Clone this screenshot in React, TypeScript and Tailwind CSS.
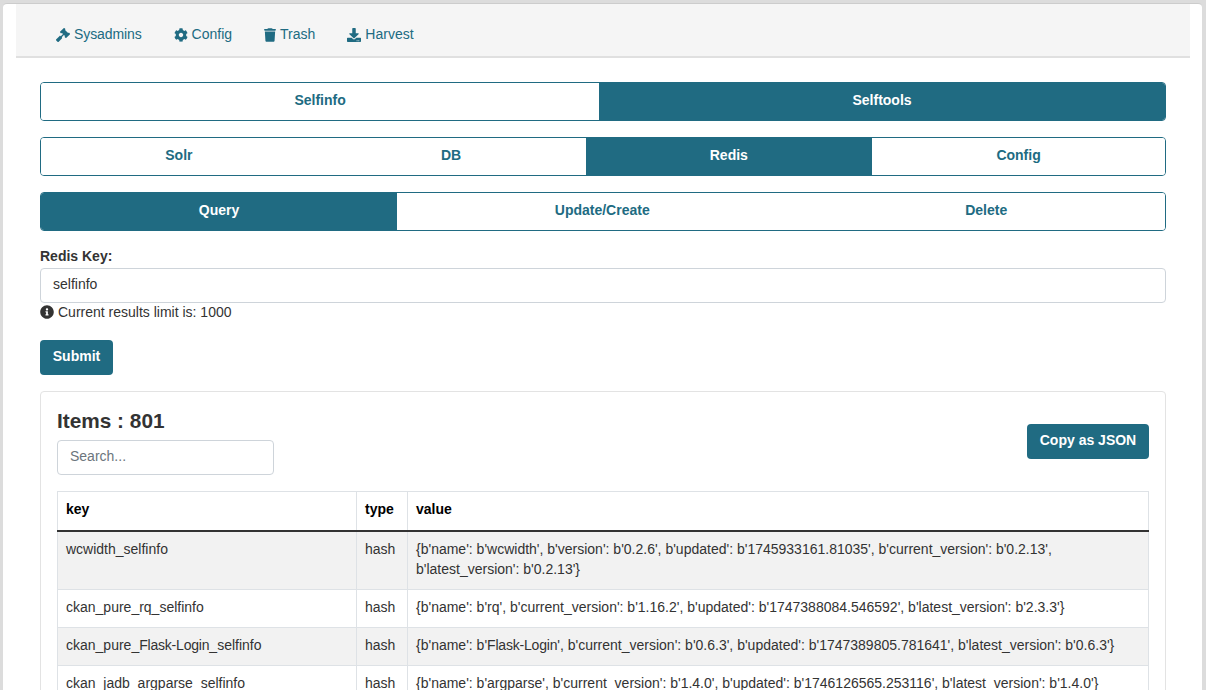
import { FaGavel, FaCog, FaDownload, FaInfoCircle } from "react-icons/fa";
import { FaTrash } from "react-icons/fa6";

function Segmented({ items, active }: { items: string[]; active: string }) {
  return (
    <div className="flex h-[39px] rounded-[4px] border border-[#206b82] overflow-hidden">
      {items.map((t) => (
        <div
          key={t}
          className={
            t === active
              ? "flex-auto flex items-center justify-center px-4 pb-[2px] text-[14px] font-bold bg-[#206b82] text-white"
              : "flex-auto flex items-center justify-center px-4 pb-[2px] text-[14px] font-bold bg-white text-[#206b82]"
          }
        >
          {t}
        </div>
      ))}
    </div>
  );
}

const rows = [
  ["wcwidth_selfinfo", "hash", "{b'name': b'wcwidth', b'version': b'0.2.6', b'updated': b'1745933161.81035', b'current_version': b'0.2.13', b'latest_version': b'0.2.13'}"],
  ["ckan_pure_rq_selfinfo", "hash", "{b'name': b'rq', b'current_version': b'1.16.2', b'updated': b'1747388084.546592', b'latest_version': b'2.3.3'}"],
  ["ckan_pure_Flask-Login_selfinfo", "hash", "{b'name': b'Flask-Login', b'current_version': b'0.6.3', b'updated': b'1747389805.781641', b'latest_version': b'0.6.3'}"],
  ["ckan_jadb_argparse_selfinfo", "hash", "{b'name': b'argparse', b'current_version': b'1.4.0', b'updated': b'1746126565.253116', b'latest_version': b'1.4.0'}"],
];

function CellText({ text }: { text: string }) {
  const parts = text.split("Flask-Login");
  if (parts.length === 1) return <>{text}</>;
  return (
    <>
      {parts[0]}
      <span className="tracking-[-0.2px]">Flask-Login</span>
      {parts[1]}
    </>
  );
}

function NavItem({ icon, label, tight }: { icon: React.ReactNode; label: string; tight?: boolean }) {
  return (
    <div className="flex items-center gap-[4px] text-[14px] text-[#206b82]">
      {icon}
      <span className={tight ? "tracking-[-0.1px]" : ""}>{label}</span>
    </div>
  );
}

export default function App() {
  return (
    <div className="h-[690px] overflow-hidden bg-[#dcdcdc] pt-[3px] px-[3px] font-['Liberation_Sans',sans-serif] text-[14px] text-[#333333] [text-rendering:optimizeLegibility] [font-kerning:normal]">
      <div className="w-[1199px] h-[700px] bg-white rounded-t-[4px] border-t border-[#cccccc] px-[13px]">
        <div className="h-[54px] w-[1174px] bg-[#f5f5f5] border-b-2 border-[#e0e0e0] flex items-center pt-[9px] pl-[40px] gap-[32px]">
          <NavItem icon={<FaGavel className="w-[14px] h-[14px]" />} label="Sysadmins" tight />
          <NavItem icon={<FaCog className="w-[14px] h-[14px]" />} label="Config" />
          <NavItem icon={<FaTrash className="w-[12px] h-[14px]" />} label="Trash" />
          <NavItem icon={<FaDownload className="w-[14px] h-[14px]" />} label="Harvest" />
        </div>
        <div className="w-[1126px] ml-[24px] mt-[24px] flex flex-col">
          <Segmented items={["Selfinfo", "Selftools"]} active="Selftools" />
          <div className="mt-[16px]">
            <Segmented items={["Solr", "DB", "Redis", "Config"]} active="Redis" />
          </div>
          <div className="mt-[16px]">
            <Segmented items={["Query", "Update/Create", "Delete"]} active="Query" />
          </div>
          <label className="mt-[15px] mb-[1px] font-bold leading-[20px]">Redis Key:</label>
          <div className="mt-[1px] h-[35px] pb-[2px] rounded-[4px] border border-[#ced4da] flex items-center px-[12px]">selfinfo</div>
          <div className="flex items-center gap-[4px] h-[18px] leading-[18px]">
            <FaInfoCircle className="w-[14px] h-[14px] text-[#333333]" />
            <span>Current results limit is: 1000</span>
          </div>
          <div className="mt-[19px] w-[73px] h-[35px] pb-[2px] rounded-[4px] bg-[#206b82] text-white font-bold flex items-center justify-center">Submit</div>
          <div className="mt-[16px] rounded-[4px] border border-[#e3e3e3] p-[16px] h-[400px]">
            <div className="flex items-start justify-between h-[83px]">
              <div>
                <div className="text-[20.8px] font-bold leading-[26px]">Items : 801</div>
                <div className="mt-[6px] w-[217px] h-[35px] pb-[2px] rounded-[4px] border border-[#ced4da] flex items-center px-[12px] text-[#6c757d]">Search...</div>
              </div>
              <div className="mt-[16px] w-[122px] h-[35px] pb-[2px] rounded-[4px] bg-[#206b82] text-white font-bold flex items-center justify-center">Copy as JSON</div>
            </div>
            <table className="w-[1092px] table-fixed border-collapse text-[14px] leading-[20px]">
              <colgroup>
                <col className="w-[299px]" />
                <col className="w-[51px]" />
                <col />
              </colgroup>
              <thead>
                <tr className="h-[39px]">
                  {["key", "type", "value"].map((h) => (
                    <th key={h} className="border border-[#dee2e6] border-b-[2px] border-b-[#333333] px-[8px] pb-[4px] text-left font-bold text-black">{h}</th>
                  ))}
                </tr>
              </thead>
              <tbody>
                {rows.map((r, i) => (
                  <tr key={r[0]} className={i % 2 === 0 ? "bg-[#f2f2f2]" : "bg-white"}>
                    {r.map((c, j) => (
                      <td key={j} className="border border-[#dee2e6] px-[8px] pt-[7px] pb-[10px] align-top">
                        <CellText text={c} />
                      </td>
                    ))}
                  </tr>
                ))}
              </tbody>
            </table>
          </div>
        </div>
      </div>
    </div>
  );
}
